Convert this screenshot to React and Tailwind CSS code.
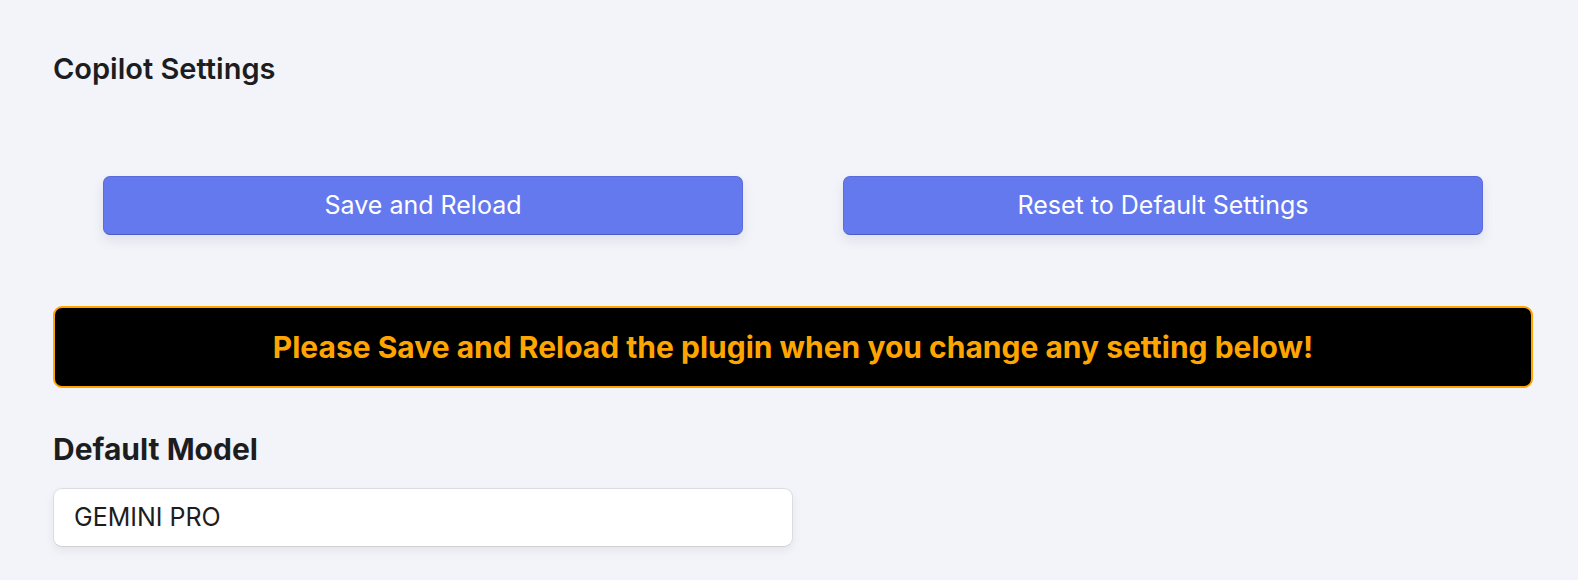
export default function App() {
  return (
    <div className="min-h-[580px] bg-[#f3f4f9] pl-[53px] pr-[45px] pt-[51px] text-[#1d1d1f]" style={{ fontFamily: 'Inter, "Noto Sans", sans-serif' }}>
      <h1 className="text-[29px] font-semibold leading-[35px]">Copilot Settings</h1>

      <div className="mt-[90px] grid grid-cols-2">
        <div className="px-[50px]">
          <button className="h-[59px] w-full rounded-[7px] border border-[#5a6bdc] border-b-[#4c5cc8] bg-[#6579ee] text-[25px] text-white shadow-[0_6px_12px_rgba(80,90,140,0.12)]">
            Save and Reload
          </button>
        </div>
        <div className="px-[50px]">
          <button className="h-[59px] w-full rounded-[7px] border border-[#5a6bdc] border-b-[#4c5cc8] bg-[#6579ee] text-[25px] text-white shadow-[0_6px_12px_rgba(80,90,140,0.12)]">
            Reset to Default Settings
          </button>
        </div>
      </div>

      <div className="mt-[71px] flex h-[82px] items-center justify-center rounded-[9px] border-2 border-[#ffa500] bg-black">
        <p className="text-[30px] font-bold text-[#ffa500]">Please Save and Reload the plugin when you change any setting below!</p>
      </div>

      <h2 className="mt-[43px] text-[30px] font-bold leading-[36px]">Default Model</h2>

      <div className="mt-[21px] flex h-[59px] w-[740px] items-center rounded-[9px] border border-[#dcdcdf] border-b-[#cfcfd2] bg-white px-[20px] text-[25px] text-[#1d1d1f] shadow-[0_4px_10px_rgba(0,0,0,0.06)]">
        GEMINI PRO
      </div>
    </div>
  );
}
